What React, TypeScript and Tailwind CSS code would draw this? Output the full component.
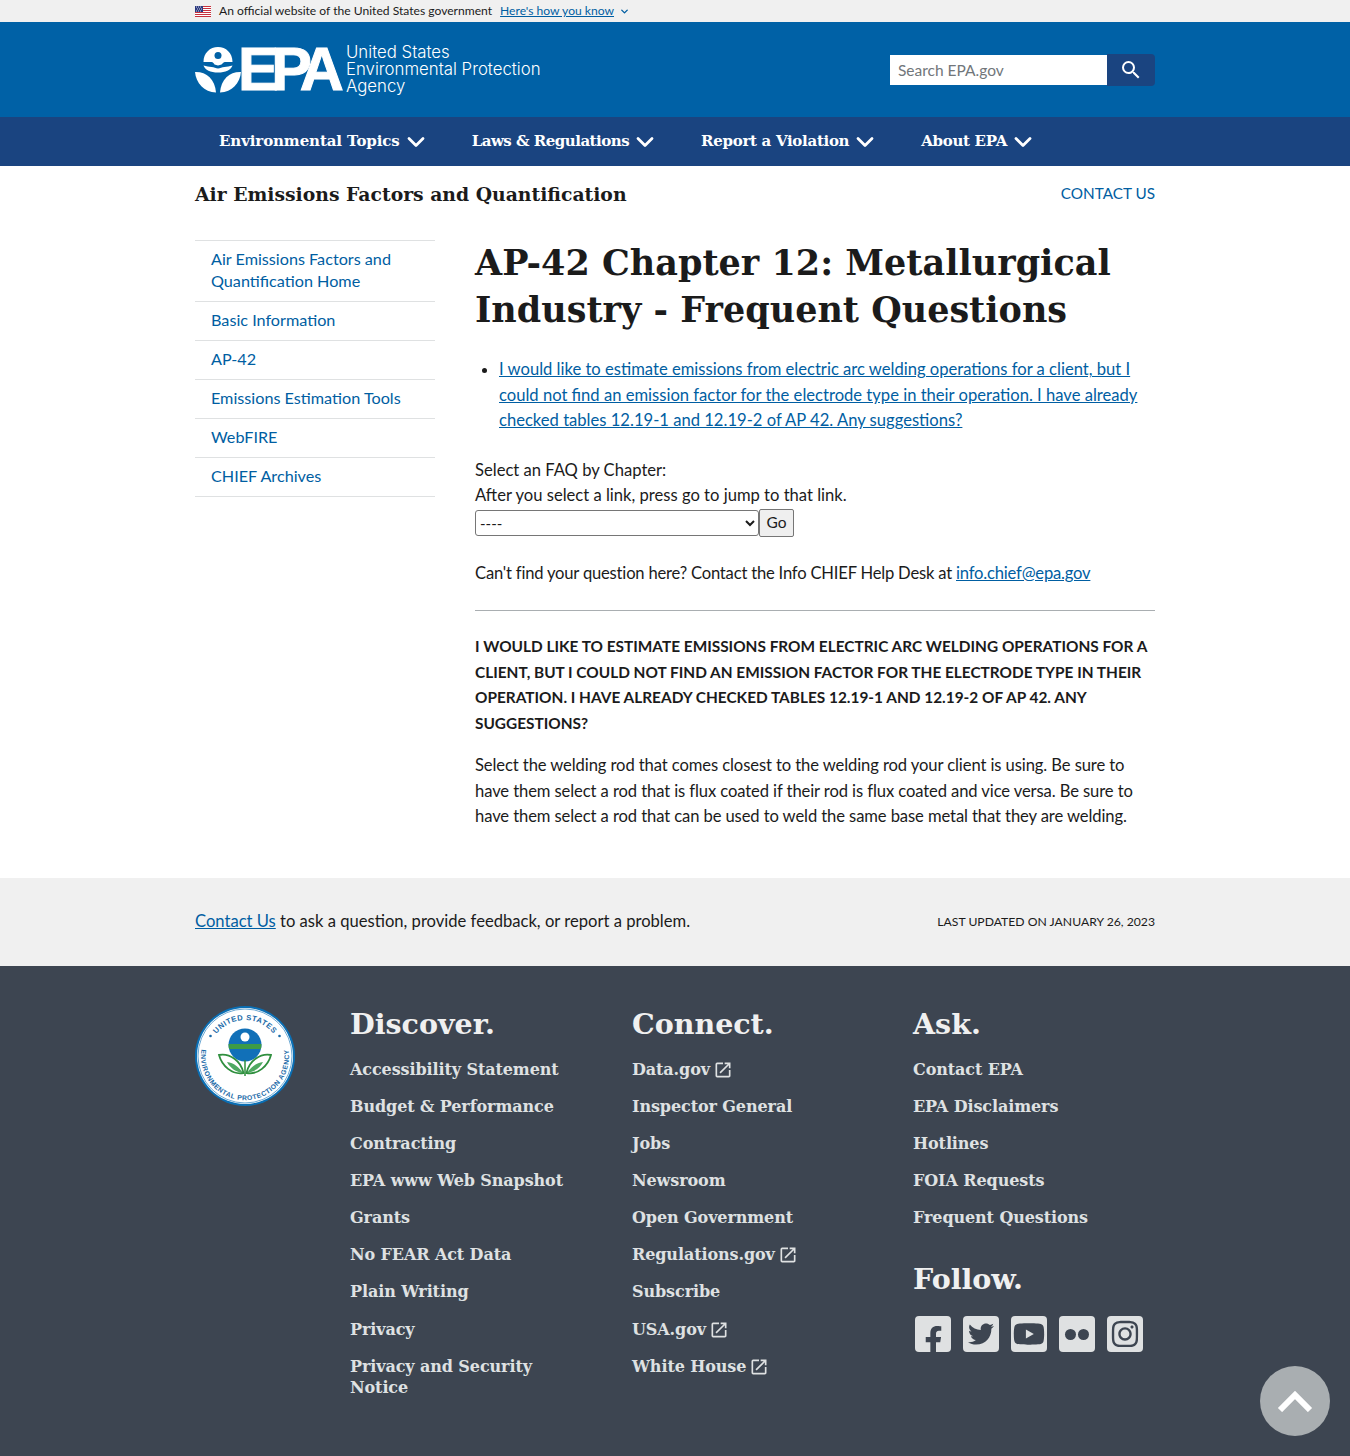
import { ChevronDown } from 'lucide-react';
import { FaFacebookF, FaInstagram, FaTwitter, FaYoutube } from 'react-icons/fa';
import { MdOpenInNew, MdSearch } from 'react-icons/md';

const sans = 'font-["Lato","Noto_Sans",sans-serif]';
const serif = 'font-["DejaVu_Serif",serif]';

const sideLinks = [
  'Air Emissions Factors and Quantification Home',
  'Basic Information',
  'AP-42',
  'Emissions Estimation Tools',
  'WebFIRE',
  'CHIEF Archives',
];

const navItems = [
  { label: 'Environmental Topics', spacing: 'tracking-[-0.1px]' },
  { label: 'Laws & Regulations', spacing: 'tracking-[-0.5px]' },
  { label: 'Report a Violation', spacing: 'tracking-[-0.3px]' },
  { label: 'About EPA', spacing: 'tracking-[-0.3px]' },
];

const discover = [
  'Accessibility Statement',
  'Budget & Performance',
  'Contracting',
  'EPA www Web Snapshot',
  'Grants',
  'No FEAR Act Data',
  'Plain Writing',
  'Privacy',
  'Privacy and Security Notice',
];

const connect = [
  { label: 'Data.gov', ext: true },
  { label: 'Inspector General' },
  { label: 'Jobs' },
  { label: 'Newsroom' },
  { label: 'Open Government' },
  { label: 'Regulations.gov', ext: true },
  { label: 'Subscribe' },
  { label: 'USA.gov', ext: true },
  { label: 'White House', ext: true },
];

const ask = ['Contact EPA', 'EPA Disclaimers', 'Hotlines', 'FOIA Requests', 'Frequent Questions'];

const Flag = () => (
  <svg width="16" height="11" viewBox="0 0 16 11" className="shrink-0">
    <rect width="16" height="11" fill="#fff" />
    <path d="M0 .5h16M0 2.5h16M0 4.5h16M0 6.5h16M0 8.5h16M0 10.5h16" stroke="#c8313e" strokeWidth="1" />
    <rect width="8" height="6" fill="#2b3a80" />
    <path d="M1 1h1M3 1h1M5 1h1M2 3h1M4 3h1M6 3h1M1 5h1M3 5h1M5 5h1" stroke="#fff" strokeWidth=".8" />
  </svg>
);

const LogoMark = () => (
  <svg width="46" height="47" viewBox="0 0 46 47" className="shrink-0" fill="#fff">
    <path d="M8.500 16C8.500 7 15 1 23 1s14.500 6 14.500 15h-7.500c-1.500 0-2.500 1.500-3.500 2.500l-3.500 1-3.500-1C19 17.500 18 16 16.500 16Z" />
    <circle cx="23" cy="9.500" r="3.500" fill="#0061a6" />
    <path d="M8.500 19.500c3 .5 5.500 1.500 8 1.500 2.500 0 4.500 1.500 6.500 1.500s4-1.500 6.500-1.500 5-1 8-1.500c-1.500 4.500-7 7-14.500 7s-13-2.500-14.500-7Z" />
    <path d="M0 26c11-.5 20 7 21 20.500C9 46 1 37 0 26Z" />
    <path d="M46 26c-11-.5-20 7-21 20.500C37 46 45 37 46 26Z" />
  </svg>
);

const Seal = () => (
  <svg width="100" height="100" viewBox="0 0 100 100" className="shrink-0">
    <circle cx="50" cy="50" r="50" fill="#0a6fb5" />
    <circle cx="50" cy="50" r="48" fill="#fff" />
    <circle cx="50" cy="50" r="47" fill="none" stroke="#0a6fb5" strokeWidth=".6" />
    <defs>
      <path id="sealTop" d="M14 50a36 36 0 0 1 72 0" />
      <path id="sealBottom" d="M8.700 35A44 44 0 1 0 91.300 35" />
    </defs>
    <text fontSize="7.600" fontWeight="700" fill="#1a6aa8" fontFamily="Liberation Sans, sans-serif" letterSpacing=".5">
      <textPath href="#sealTop" startOffset="50%" textAnchor="middle">UNITED STATES</textPath>
    </text>
    <text fontSize="6.800" fontWeight="700" fill="#1a6aa8" fontFamily="Liberation Sans, sans-serif" letterSpacing=".5">
      <textPath href="#sealBottom" startOffset="50%" textAnchor="middle">ENVIRONMENTAL PROTECTION AGENCY</textPath>
    </text>
    <circle cx="15.500" cy="30" r="1.300" fill="#1a6aa8" />
    <circle cx="84.500" cy="30" r="1.300" fill="#1a6aa8" />
    <circle cx="50" cy="39" r="16.500" fill="#1170b8" />
    <path d="M33.600 38h32.800a16.500 16.500 0 0 1-.5 5H34.100a16.500 16.500 0 0 1-.5-5Z" fill="#3d9b46" />
    <circle cx="50" cy="31" r="4.500" fill="#fff" />
    <path d="M50 54v16" stroke="#2f8f3e" strokeWidth="1.500" />
    <path d="M48.500 67C37 69 27 60 24 49c11-2 22 6 24.500 18ZM51.500 67C63 69 73 60 76 49c-11-2-22 6-24.500 18Z" fill="#fff" stroke="#2f8f3e" strokeWidth="1.800" />
    <path d="M32 56c7 1 12 5 16 11-7-1-13-5-16-11ZM68 56c-7 1-12 5-16 11 7-1 13-5 16-11Z" fill="#2f9a45" opacity=".85" />
  </svg>
);

const SocialIcon = ({ children, end }: { children: React.ReactNode; end?: boolean }) => (
  <span
    className={`flex h-9 w-9 justify-center overflow-hidden rounded bg-[#dfe1e2] text-[#3d4551] ${end ? 'items-end' : 'items-center'}`}
  >
    {children}
  </span>
);

const FooterHeading = ({ children, className }: { children: React.ReactNode; className: string }) => (
  <h4 className={`${className} text-[28.500px] font-bold leading-[36px] text-[#f0f0f0] ${serif}`}>{children}</h4>
);

const FooterLink = ({ label, ext }: { label: string; ext?: boolean }) => (
  <li className={`mb-[16px] text-[#dfe1e2] [&:nth-child(8)]:mt-[17px] ${serif} text-[16px] font-bold leading-[21px] tracking-[-0.1px]`}>
    {label}
    {ext && <MdOpenInNew className="ml-[3px] inline-block align-[-5px]" size={20} />}
  </li>
);

export default function App() {
  return (
    <div className={`relative h-[1456px] w-full overflow-hidden bg-white text-[16.600px] leading-[25.500px] text-[#1b1b1b] ${sans}`}>
      {/* gov banner */}
      <div className="h-[22px] bg-[#f0f0f0] pt-px">
        <div className="mx-auto flex h-full w-[960px] items-center gap-2 text-[12.100px] leading-none">
          <Flag />
          <span>An official website of the United States government</span>
          <span className="flex items-center gap-[5px] text-[#005ea2]">
            <span className="underline">Here's how you know</span>
            <ChevronDown size={11} strokeWidth={3} />
          </span>
        </div>
      </div>

      {/* header */}
      <div className="h-[95px] bg-[#0061a6]">
        <div className="mx-auto flex h-full w-[960px] items-center justify-between">
          <div className="flex items-center">
            <LogoMark />
            <span className='ml-[-3px] w-[106px] font-["Liberation_Sans",sans-serif] text-[61px] font-bold leading-none tracking-[-7.500px] text-white [-webkit-text-stroke:1px_white]'>
              EPA
            </span>
            <span className='ml-[2px] font-["Inter",sans-serif] text-[16.800px] font-light leading-[17px] text-white'>
              United States
              <br />
              Environmental Protection
              <br />
              Agency
            </span>
          </div>
          <div className="flex h-8 w-[265px] items-center">
            <input
              placeholder="Search EPA.gov"
              className="h-[30px] w-[217px] bg-white px-2 text-[15.500px] text-[#1b1b1b] placeholder:text-[#71767a] focus:outline-none"
            />
            <button className="flex h-8 flex-1 items-center justify-center rounded-r bg-[#1a4480] text-white">
              <MdSearch size={24} />
            </button>
          </div>
        </div>
      </div>

      {/* nav */}
      <div className="h-[49px] bg-[#1a4480]">
        <div className="mx-auto flex h-full w-[960px] items-center">
          {navItems.map((item) => (
            <div key={item.label} className={`flex items-center gap-2 px-6 text-[15px] font-bold text-white ${item.spacing} ${serif}`}>
              {item.label}
              <ChevronDown size={28} strokeWidth={2.400} className="-mx-[6px]" />
            </div>
          ))}
        </div>
      </div>

      <div className="mx-auto w-[960px]">
        {/* site title */}
        <div className="flex h-[56px] items-center justify-between">
          <h2 className={`text-[18.800px] font-bold leading-none ${serif}`}>Air Emissions Factors and Quantification</h2>
          <a className="text-[15.300px] uppercase text-[#005ea2]">Contact Us</a>
        </div>

        <div className="mt-[18px] flex gap-10">
          {/* sidebar */}
          <ul className="w-60 shrink-0 border-t border-[#dfe1e2] text-[16.200px] leading-[22px] text-[#005ea2]">
            {sideLinks.map((link) => (
              <li key={link} className="border-b border-[#dfe1e2] px-4 pb-[9px] pt-[7px]">
                {link}
              </li>
            ))}
          </ul>

          {/* main */}
          <div className="w-[680px]">
            <h1 className={`-mt-px text-[35px] font-bold leading-[47px] ${serif}`}>
              AP-42 Chapter 12: Metallurgical Industry - Frequent Questions
            </h1>
            <ul className="mt-[24px] list-disc pl-6">
              <li>
                <a className="text-[#005ea2] underline">
                  I would like to estimate emissions from electric arc welding operations for a client, but I could not
                  find an emission factor for the electrode type in their operation. I have already checked tables
                  12.19-1 and 12.19-2 of AP 42. Any suggestions?
                </a>
              </li>
            </ul>
            <p className="mt-[24px]">
              Select an FAQ by Chapter:
              <br />
              After you select a link, press go to jump to that link.
            </p>
            <div className="flex items-center">
              <select className="h-[26px] w-[284px] rounded-[3px] border border-[#767676] bg-white text-[15px]">
                <option>----</option>
              </select>
              <button className="h-[28px] w-[35px] rounded-[2px] border border-[#767676] bg-[#efefef] text-center text-[15.500px] leading-none">
                Go
              </button>
            </div>
            <p className="mt-[24px] tracking-[-0.2px]">
              Can't find your question here? Contact the Info CHIEF Help Desk at{' '}
              <a className="text-[#005ea2] underline">info.chief@epa.gov</a>
            </p>
            <hr className="mt-[24px] border-[#a9aeb1]" />
            <h3 className="mt-[23px] text-[15.400px] font-bold uppercase leading-[25.500px]">
              I would like to estimate emissions from electric arc welding operations for a client, but I could not
              find an emission factor for the electrode type in their operation. I have already checked tables 12.19-1
              and 12.19-2 of AP 42. Any suggestions?
            </h3>
            <p className="mt-[17px] tracking-[-0.1px]">
              Select the welding rod that comes closest to the welding rod your client is using. Be sure to have them
              select a rod that is flux coated if their rod is flux coated and vice versa. Be sure to have them select
              a rod that can be used to weld the same base metal that they are welding.
            </p>
          </div>
        </div>
      </div>

      {/* pre footer */}
      <div className="absolute inset-x-0 top-[878px] h-[88px] bg-[#f0f0f0]">
        <div className="mx-auto flex h-[87px] w-[960px] items-center justify-between">
          <p>
            <a className="text-[#005ea2] underline">Contact Us</a> to ask a question, provide feedback, or report a
            problem.
          </p>
          <span className="text-[12.200px] uppercase">Last updated on January 26, 2023</span>
        </div>
      </div>

      {/* footer */}
      <div className="absolute inset-x-0 top-[966px] h-[490px] bg-[#3d4551]">
        <div className="mx-auto flex w-[960px] pt-10">
          <div className="w-[155px] shrink-0">
            <Seal />
          </div>
          <div className="grid flex-1 grid-cols-[282px_281px_1fr]">
            <div className="w-[240px]">
              <FooterHeading className="mb-[17px]">Discover.</FooterHeading>
              <ul>
                {discover.map((label) => (
                  <FooterLink key={label} label={label} />
                ))}
              </ul>
            </div>
            <div className="w-[240px]">
              <FooterHeading className="mb-[17px]">Connect.</FooterHeading>
              <ul>
                {connect.map((link) => (
                  <FooterLink key={link.label} label={link.label} ext={link.ext} />
                ))}
              </ul>
            </div>
            <div>
              <FooterHeading className="mb-[17px]">Ask.</FooterHeading>
              <ul>
                {ask.map((label) => (
                  <FooterLink key={label} label={label} />
                ))}
              </ul>
              <FooterHeading className="mt-[33px]">Follow.</FooterHeading>
              <div className="mt-[19px] flex gap-3 pl-[2px]">
                <SocialIcon end>
                  <FaFacebookF size={29} className="-mb-[3px]" />
                </SocialIcon>
                <SocialIcon>
                  <FaTwitter size={26} />
                </SocialIcon>
                <SocialIcon>
                  <FaYoutube size={32} />
                </SocialIcon>
                <SocialIcon>
                  <span className="flex gap-[2px]">
                    <span className="h-[11px] w-[11px] rounded-full bg-[#3d4551]" />
                    <span className="h-[11px] w-[11px] rounded-full bg-[#3d4551]" />
                  </span>
                </SocialIcon>
                <SocialIcon>
                  <FaInstagram size={30} />
                </SocialIcon>
              </div>
            </div>
          </div>
        </div>
      </div>

      {/* back to top */}
      <button className="absolute left-[1260px] top-[1366px] flex h-[70px] w-[70px] items-center justify-center rounded-full bg-[#a9aeb1]">
        <svg width="36" height="22" viewBox="0 0 36 22" fill="none" stroke="#fff" strokeWidth="6">
          <path d="M3 20 18 5l15 15" />
        </svg>
      </button>
    </div>
  );
}
